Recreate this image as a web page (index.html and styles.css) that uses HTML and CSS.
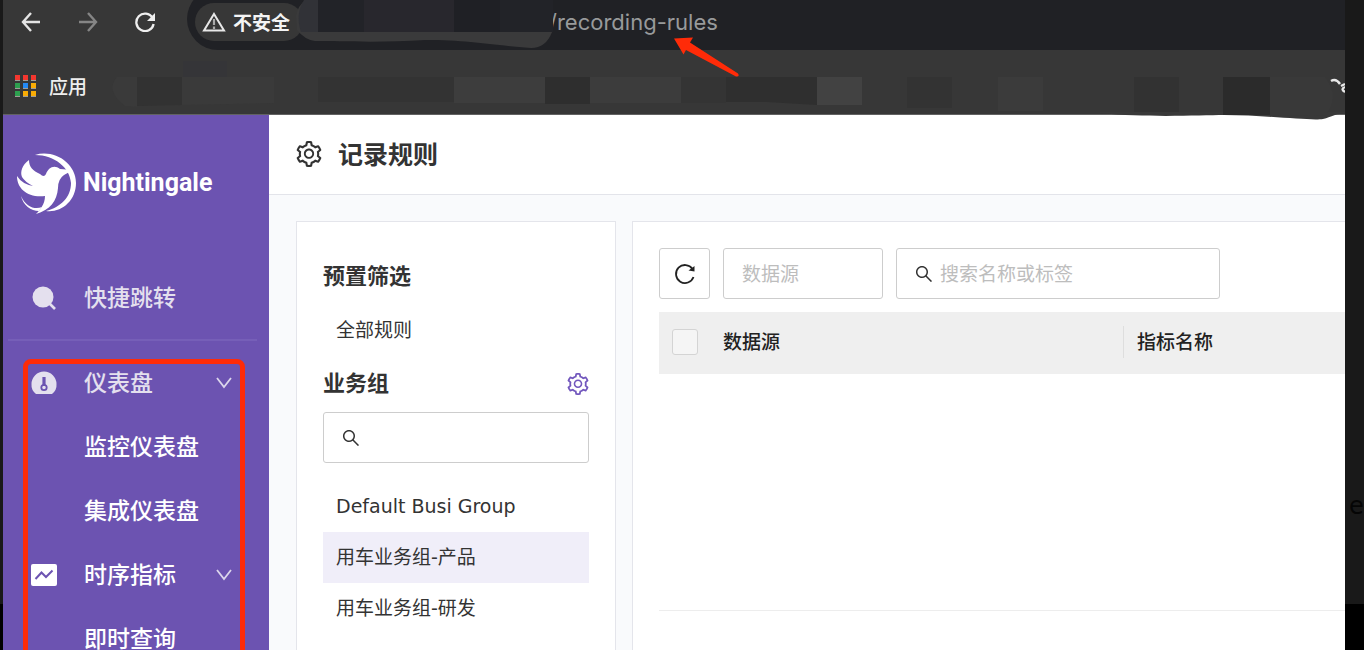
FILE: index.html
```html
<!DOCTYPE html>
<html lang="zh-CN">
<head>
<meta charset="utf-8">
<title>记录规则</title>
<link rel="stylesheet" href="styles.css">
</head>
<body>
<svg class="symbols" aria-hidden="true">
  <symbol id="gear" viewBox="64 64 896 896"><path d="M924.8 625.7l-65.5-56c3.1-19 4.7-38.4 4.7-57.8s-1.6-38.8-4.7-57.8l65.5-56a32.03 32.03 0 009.3-35.2l-.9-2.6a443.74 443.74 0 00-79.7-137.9l-1.8-2.1a32.12 32.12 0 00-35.1-9.5l-81.3 28.9c-30-24.6-63.5-44-99.7-57.6l-15.7-85a32.05 32.05 0 00-25.8-25.7l-2.7-.5c-52.1-9.4-106.9-9.4-159 0l-2.7.5a32.05 32.05 0 00-25.8 25.7l-15.8 85.4a351.86 351.86 0 00-99 57.4l-81.9-29.1a32 32 0 00-35.1 9.5l-1.8 2.1a446.02 446.02 0 00-79.7 137.9l-.9 2.6c-4.5 12.5-.8 26.5 9.3 35.2l66.3 56.6c-3.1 18.8-4.6 38-4.6 57.1 0 19.2 1.5 38.4 4.6 57.1L99 625.5a32.03 32.03 0 00-9.3 35.2l.9 2.6c18.1 50.4 44.9 96.9 79.7 137.9l1.8 2.1a32.12 32.12 0 0035.1 9.5l81.9-29.1c29.8 24.5 63.1 43.9 99 57.4l15.8 85.4a32.05 32.05 0 0025.8 25.7l2.7.5a449.4 449.4 0 00159 0l2.7-.5a32.05 32.05 0 0025.8-25.7l15.7-85a350 350 0 0099.7-57.6l81.3 28.9a32 32 0 0035.1-9.5l1.8-2.1c34.8-41.1 61.6-87.5 79.7-137.9l.9-2.6c4.5-12.3.8-26.3-9.3-35zM788.3 465.9c2.5 15.1 3.8 30.6 3.8 46.1s-1.3 31-3.8 46.1l-6.6 40.1 74.7 63.9a370.03 370.03 0 01-42.6 73.6L721 702.8l-31.4 25.8c-23.9 19.6-50.5 35-79.3 45.8l-38.1 14.3-17.9 97a377.5 377.5 0 01-85 0l-17.9-97.2-37.8-14.5c-28.5-10.8-55-26.2-78.7-45.7l-31.4-25.9-93.4 33.2c-17-22.9-31.2-47.6-42.6-73.6l75.5-64.5-6.5-40c-2.4-14.9-3.7-30.3-3.7-45.5 0-15.3 1.2-30.6 3.7-45.5l6.5-40-75.5-64.5c11.3-26.1 25.6-50.7 42.6-73.6l93.4 33.2 31.4-25.9c23.7-19.5 50.2-34.9 78.7-45.7l37.9-14.3 17.9-97.2c28.1-3.2 56.8-3.2 85 0l17.9 97 38.1 14.3c28.7 10.8 55.4 26.2 79.3 45.8l31.4 25.8 92.8-32.9c17 22.9 31.2 47.6 42.6 73.6L781.8 426l6.5 39.9zM512 326c-97.2 0-176 78.8-176 176s78.8 176 176 176 176-78.8 176-176-78.8-176-176-176zm79.2 255.2A111.6 111.6 0 01512 614c-29.9 0-58-11.7-79.2-32.8A111.6 111.6 0 01400 502c0-29.9 11.7-58 32.8-79.2C454 401.6 482.1 390 512 390c29.9 0 58 11.6 79.2 32.8A111.6 111.6 0 01624 502c0 29.9-11.7 58-32.8 79.2z"/></symbol>
  <symbol id="search" viewBox="64 64 896 896"><path d="M909.6 854.5L649.9 594.8C690.2 542.7 712 479 712 412c0-80.2-31.3-155.4-87.9-212.1-56.6-56.7-132-87.9-212.1-87.9s-155.5 31.3-212.1 87.9C143.2 256.5 112 331.8 112 412c0 80.1 31.3 155.5 87.9 212.1C256.5 680.8 331.8 712 412 712c67 0 130.6-21.8 182.7-62l259.7 259.6a8.2 8.2 0 0011.6 0l43.6-43.5a8.2 8.2 0 000-11.6zM570.4 570.4C528 612.7 471.8 636 412 636s-116-23.3-158.4-65.6C211.3 528 188 471.8 188 412s23.3-116.1 65.6-158.4C296 211.3 352.2 188 412 188s116.1 23.2 158.4 65.6S636 352.2 636 412s-23.3 116.1-65.6 158.4z"/></symbol>
  <symbol id="chevron" viewBox="0 0 16 12"><path d="M1 1l7 9 7-9" fill="none" stroke="currentColor" stroke-width="1.8"/></symbol>
</svg>

<div class="backdrop">
  <div class="window">
    <header class="browser">
      <div class="toolbar">
        <button class="nav" aria-label="后退"><svg width="20" height="20" viewBox="0 0 20 20"><path d="M19 10H2M10 1L2 10l8 9" fill="none" stroke="#e4e4e4" stroke-width="2.4"/></svg></button>
        <button class="nav" aria-label="前进"><svg width="20" height="20" viewBox="0 0 20 20"><path d="M1 10h17M10 1l8 9-8 9" fill="none" stroke="#858585" stroke-width="2.4"/></svg></button>
        <button class="nav" aria-label="刷新"><svg width="20" height="20" viewBox="0 0 20 20"><path d="M17.600 6A8.700 8.700 0 1 0 18.600 12" fill="none" stroke="#efefef" stroke-width="2.300"/><path d="M20 1v8h-8z" fill="#efefef"/></svg></button>
        <div class="omnibox">
          <button class="chip"><svg width="24" height="20" viewBox="0 0 24 20"><path d="M12 2L22 18.500H2z" fill="none" stroke="#e8e8e8" stroke-width="2"/><path d="M12 7v6M12 14.500v2.500" stroke="#aaa" stroke-width="2.200"/></svg>不安全</button>
          <span class="url">/recording-rules</span>
        </div>
      </div>
      <nav class="bookmarks">
        <a class="apps" href="#">
          <svg width="22" height="22" viewBox="0 0 22 22">
            <path d="M0 0h5v5H0zM8 0h5v5H8zM16 0h5v5h-5z" fill="#f4372f"/>
            <path d="M0 8h5v5H0zM0 16h5v5H0z" fill="#2da04f"/><path d="M8 8h5v5H8z" fill="#2389f5"/>
            <path d="M16 8h5v5h-5zM8 16h5v5H8zM16 16h5v5h-5z" fill="#f8ac05"/>
            <path d="M0 5h5v1H0zM8 5h5v1H8zM16 5h5v1h-5zM0 13h5v1H0zM8 13h5v1H8zM16 13h5v1h-5zM0 21h5v1H0zM8 21h5v1H8zM16 21h5v1h-5z" fill="#a09d98"/>
          </svg>应用</a>
      </nav>
      <svg class="mosaic" width="1342" height="124" viewBox="3 0 1342 124" aria-hidden="true">
        <path d="M296 16Q298 5 306 0H552V32Q546 48 531 48C490 45 470 40 425 40C380 43 340 41 315 41Q305 40 297 30Z" fill="#3a3a3b"/>
        <path d="M304 0h14v32h-17q-6-18 3-32z" fill="#313237"/>
        <path d="M318 0h235v32H318z" fill="#222328"/><path d="M364 0h90v32h-90z" fill="#28272d"/><path d="M454 0h46v32h-46z" fill="#1f2025"/>
        <path d="M183 61h44v16h-44z" fill="#353538"/>
        <path d="M137 77h-20q-12 14 8 29l12 1z" fill="#3a3a3a"/><path d="M137 77h45v28l-45 1z" fill="#323232"/><path d="M182 77h92v26l-92 2z" fill="#3a3a3a"/>
        <path d="M318 77h136v25H318z" fill="#333"/><path d="M454 77h91v26h-91z" fill="#3d3d3d"/><path d="M545 77h45v27h-45z" fill="#2e2e2e"/>
        <path d="M590 77h91v26h-91z" fill="#3c3c3c"/><path d="M681 77h45v26h-45z" fill="#343434"/><path d="M726 77h91v28l-50-3h-41z" fill="#2f2f2f"/><path d="M817 77h45v28h-45z" fill="#424242"/>
        <path d="M907 77h45v31h-45z" fill="#333"/><path d="M998 77h45v34h-45z" fill="#3b3b3b"/><path d="M1134 77h45v38h-45z" fill="#323232"/>
        <path d="M1100 113C1150 118 1200 115 1224 115C1265 115 1310 121 1323 119C1333 117 1335 113 1345 114V112H1100z" fill="#393939"/>
        <path d="M1223 77h47v38h-47z" fill="#2b2b2b"/><path d="M1270 77h55q16 20 0 39l-55-1z" fill="#393939"/>
        <path d="M1331 81q5-3 9 3M1345 84l-4 2M1345 87q-5 2 0 5" fill="none" stroke="#e8e8e8" stroke-width="2.4"/>
      </svg>
      <svg class="arrow" width="64" height="40" viewBox="675 37 64 40" aria-hidden="true"><path d="M674 38.500L693 37.500 690 42.500 738 73.500Q740 77 736 76.500L686 50 683.500 54.500z" fill="#ff2b08"/></svg>
    </header>

    <div class="app">
      <aside class="sidebar">
        <a class="logo" href="#">
          <svg width="60" height="62" viewBox="17 152 60 62" fill="#fff" aria-hidden="true">
            <path d="M35 155C54 149 76 163 76 183C76 201 61 213 46 211C61 207 71 197 71 183C70 168 55 155 35 155z"/>
            <path d="M21 196C26 207 35 210 42 207L39 211C31 211 23 205 21 196z"/>
            <path d="M29 160C22 165 20 172 22 177Q25 182 33 186Q22 184 17 176C17 189 28 198 45 196C45 204 40 210 36 214C50 210 57 201 58 188Q58 179 64 175L73 170 60 169C54 164 48 168 46 174Q44 178 40 174C33 171 29 167 29 160z"/>
          </svg>
          <span class="brand">Nightingale</span>
        </a>
        <a class="item quick" href="#"><svg class="ico" viewBox="0 0 26 26"><circle cx="12" cy="12" r="10.500"/><path d="M18 18l6 6" stroke="currentColor" stroke-width="2.600"/></svg>快捷跳转</a>
        <nav class="menu">
          <a class="item dim" href="#"><svg class="ico" viewBox="0 0 26 26"><path d="M5 24Q0 20 0.500 14A12.500 12.500 0 0 1 25.500 14Q26 20 21 24z"/><path d="M13 7v9" stroke="#6c53b1" stroke-width="3.200"/><circle cx="13" cy="17.500" r="2.700" fill="none" stroke="#6c53b1" stroke-width="1.800"/></svg>仪表盘<svg class="chev"><use href="#chevron"/></svg></a>
          <a class="item" href="#">监控仪表盘</a>
          <a class="item" href="#">集成仪表盘</a>
          <a class="item" href="#"><svg class="ico" viewBox="0 0 26 26"><rect y="2" width="26" height="22" rx="2"/><path d="M4.500 17l6-6.500 4.500 4.500 6.500-6.500" fill="none" stroke="#6c53b1" stroke-width="2"/></svg>时序指标<svg class="chev"><use href="#chevron"/></svg></a>
          <a class="item" href="#">即时查询</a>
        </nav>
      </aside>

      <main class="main">
        <div class="title"><svg class="gear" aria-hidden="true"><use href="#gear"/></svg><h1>记录规则</h1></div>
        <div class="content">
          <section class="panel groups">
            <h2>预置筛选</h2>
            <a class="row" href="#">全部规则</a>
            <h2>业务组<button class="manage" aria-label="管理业务组"><svg class="gear small"><use href="#gear"/></svg></button></h2>
            <label class="field"><svg class="find"><use href="#search"/></svg><input type="text" aria-label="搜索业务组"></label>
            <div class="list">
              <a class="row" href="#">Default Busi Group</a>
              <a class="row active" href="#">用车业务组-产品</a>
              <a class="row" href="#">用车业务组-研发</a>
            </div>
          </section>
          <section class="panel rules">
            <div class="filters">
              <button class="reload" aria-label="刷新列表"><svg width="22" height="22" viewBox="0 0 22 22"><path d="M18.500 6A9 9 0 1 0 19.500 14" fill="none" stroke="#222" stroke-width="1.800"/><path d="M20.500 3v5.500l-6-1z" fill="#222"/></svg></button>
              <select class="source" aria-label="数据源"><option>数据源</option></select>
              <label class="field query"><svg class="find"><use href="#search"/></svg><input type="text" placeholder="搜索名称或标签" aria-label="搜索"></label>
            </div>
            <table class="table">
              <thead><tr><th class="pick"><input type="checkbox" aria-label="全选"></th><th class="src">数据源</th><th class="metric"><span>指标名称</span></th></tr></thead>
              <tbody><tr><td colspan="3"></td></tr></tbody>
            </table>
          </section>
        </div>
      </main>
    </div>
  </div>
  <div class="behind" aria-hidden="true">e</div>
</div>
</body>
</html>
```

FILE: styles.css
```css
* { box-sizing: border-box; }
body {
  margin: 0;
  overflow: hidden;
  font: 19px/28px "DejaVu Sans", "Noto Sans CJK SC", sans-serif;
  color: #333;
}
a { color: inherit; text-decoration: none; }
button { border: 0; padding: 0; background: none; font: inherit; color: inherit; }
svg { display: block; flex: none; fill: currentColor; }
.symbols { position: absolute; width: 0; height: 0; }

.backdrop {
  display: flex;
  height: 100vh;
  padding-left: 3px;
  overflow: hidden;
  background: linear-gradient(#191919 604px, #000 604px);
}
.window { flex: 1; min-width: 0; display: flex; flex-direction: column; }
.behind { width: 19px; padding: 492px 0 0 4px; font-size: 24px; color: #050505; }

/* browser chrome */
.browser {
  position: relative;
  background: #373737;
  border-bottom: 1px solid #626262;
  font-family: "Noto Sans CJK SC", sans-serif;
}
.toolbar { display: flex; height: 50px; gap: 37px; padding-left: 18px; }
.nav { height: 44px; }
.omnibox {
  flex: 1;
  display: flex;
  align-items: center;
  gap: 246px;
  margin: -12px 0 0 -5px;
  padding: 6px 8px 0;
  background: #202125;
  border-radius: 31px 0 0 31px;
}
.chip {
  display: flex;
  align-items: center;
  gap: 7px;
  width: 108px;
  height: 38px;
  padding-left: 7px;
  border-radius: 19px;
  background: #373737;
  color: #f4f4f4;
  font-weight: 700;
  white-space: nowrap;
}
.url { font: 22px/28px Inter, Roboto, sans-serif; color: #989a9b; }
.bookmarks { display: flex; align-items: center; height: 64px; padding: 0 12px; }
.apps { display: flex; align-items: center; gap: 12px; padding: 15px 0 7px; font-weight: 500; color: #eee; }
.mosaic { position: absolute; top: 0; left: 0; z-index: 1; }
.arrow { position: absolute; top: 37px; left: 672px; z-index: 1; overflow: visible; }

/* sidebar */
.app { flex: 1; min-height: 0; display: flex; }
.sidebar { width: 266px; flex: none; background: #6c53b1; color: #fff; }
.logo { display: flex; align-items: center; gap: 6px; padding: 37px 0 0 14px; }
.brand { font: 700 25px/36px Roboto, "Liberation Sans", sans-serif; }
.item {
  display: flex;
  align-items: center;
  height: 64px;
  padding-left: 81px;
  font-size: 23px;
  font-weight: 500;
}
.ico { width: 26px; height: 26px; margin: 0 27px 0 -53px; }
.chev { width: 16px; height: 12px; margin: 0 37px 0 auto; color: #dcd6ec; }
.quick {
  height: 74px;
  margin: 53px 12px 0 5px;
  padding: 0 0 10px 76px;
  color: #e4e0ee;
  border-bottom: 2px solid #765fb8;
}
.dim { color: #e4e0ee; }
.menu { position: relative; padding-top: 10px; }
.menu::after {
  content: "";
  position: absolute;
  inset: 18px 24px -30px 20px;
  border: 5px solid #ff2b08;
  border-radius: 8px;
  pointer-events: none;
}

/* page */
.main { flex: 1; min-width: 0; display: flex; flex-direction: column; background: #f9fafc; }
.title {
  display: flex;
  align-items: center;
  gap: 16px;
  height: 80px;
  padding: 0 0 2px 27px;
  background: #fff;
  border-bottom: 1px solid #e3e4ea;
}
h1 { margin: 0; padding-top: 4px; font-size: 25px; line-height: 36px; font-weight: 700; }
.gear { width: 26px; height: 26px; }
.small { width: 22px; height: 22px; color: #7257bd; }
.content { flex: 1; min-height: 0; display: flex; gap: 16px; padding: 26px 0 0 27px; }
.panel { padding: 26px; background: #fff; border: 1px solid #e4e5eb; border-bottom: 0; overflow: hidden; }
.groups { width: 320px; flex: none; padding-top: 27px; }
.rules { flex: 1; min-width: 0; border-right: 0; padding-right: 0; }
h2 {
  display: flex;
  align-items: center;
  justify-content: space-between;
  height: 56px;
  margin: 0;
  font-size: 22px;
  font-weight: 700;
}
.row { display: flex; align-items: center; height: 51px; padding: 0 0 2px 13px; }
.active { background: #f0eef9; }
.list { padding-top: 18px; }
.field, .source, .reload {
  display: flex;
  align-items: center;
  height: 51px;
  border: 1px solid #cdcdcd;
  border-radius: 3px;
  background: #fff;
}
.field { gap: 7px; padding: 0 18px; color: #333; }
.find { width: 18px; height: 18px; }
.field input { flex: 1; min-width: 0; border: 0; outline: 0; padding: 0; background: none; font: inherit; color: inherit; }
.field input::placeholder { color: #bdbdbd; opacity: 1; }
.filters { display: flex; gap: 13px; }
.reload { width: 51px; justify-content: center; }
.source { width: 160px; padding: 0 18px; appearance: none; font: inherit; color: #bdbdbd; }
.query { width: 324px; }
.table { width: 100%; margin-top: 13px; border-collapse: collapse; table-layout: fixed; }
th { height: 62px; padding: 0 13px 2px; background: #efefef; text-align: left; font-weight: 500; color: #222; }
.pick { width: 51px; }
.src { width: 413px; }
.metric { padding-left: 0; }
.metric span { display: block; border-left: 1px solid #dedede; padding: 2px 0 2px 13px; }
.pick input {
  display: block;
  appearance: none;
  width: 26px;
  height: 26px;
  margin: 0;
  border: 1px solid #d4d4d4;
  border-radius: 3px;
  background: #f5f5f5;
}
td { height: 236px; padding: 0; border-bottom: 1px solid #ededed; }
```
